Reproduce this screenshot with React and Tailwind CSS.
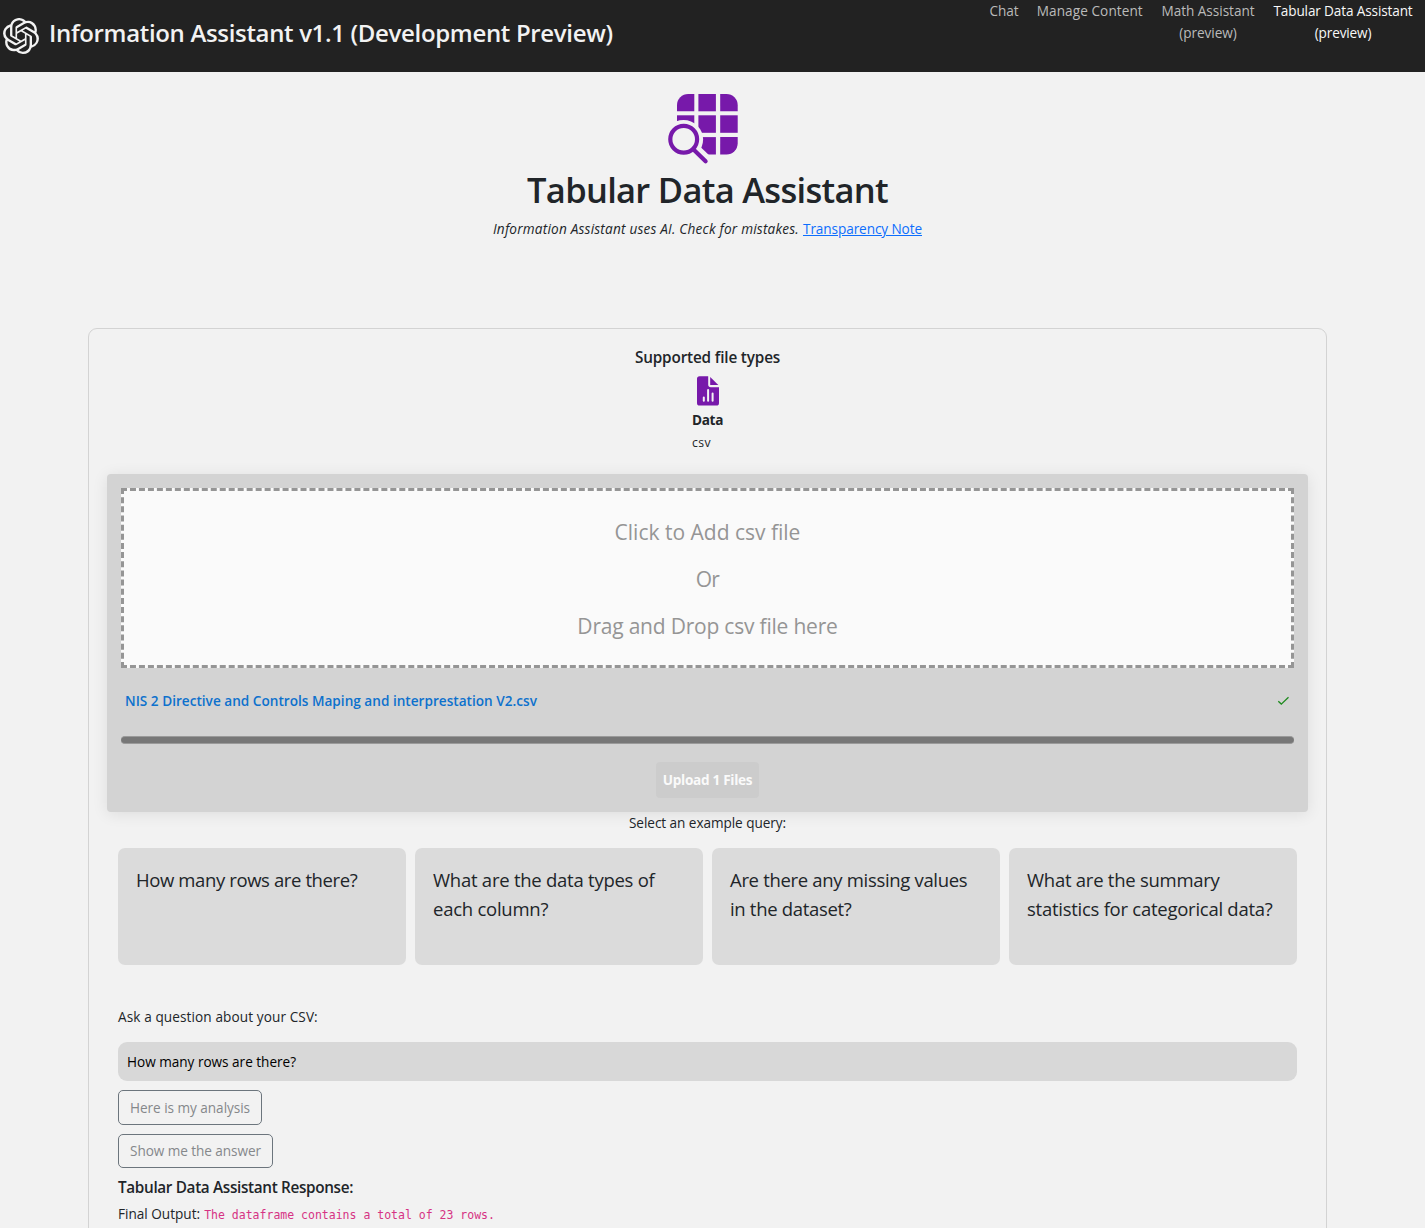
import React from "react";
import { SiOpenai } from "react-icons/si";

const navItems = [
  { lines: ["Chat"], className: "w-[29px] tracking-[-0.07px]" },
  { lines: ["Manage Content"], className: "w-[106.5px] tracking-[0.08px]" },
  { lines: ["Math Assistant", "(preview)"], className: "w-[94px] tracking-[-0.03px]" },
  { lines: ["Tabular Data Assistant", "(preview)"], className: "w-[140px] tracking-[-0.14px]", active: true },
];

const examples = [
  { lines: ["How many rows are there?"], className: "tracking-[-0.39px]" },
  { lines: ["What are the data types of", "each column?"], className: "tracking-[-0.25px]" },
  { lines: ["Are there any missing values", "in the dataset?"], className: "tracking-[-0.32px]" },
  { lines: ["What are the summary", "statistics for categorical data?"], className: "tracking-[-0.26px]" },
];

function TableSearchIcon() {
  return (
    <svg width="72" height="72" viewBox="667 93 72 72" className="block" fill="#7719aa">
      <mask id="lens-cut">
        <rect x="667" y="93" width="72" height="72" fill="#fff" />
        <circle cx="683.5" cy="139.5" r="19.6" fill="#000" />
        <path d="M690 146L712 167" stroke="#000" strokeWidth="13" />
      </mask>
      <g mask="url(#lens-cut)">
        <path d="M694.3 94V111.3H677V105.2A11.2 11.2 0 0 1 688.2 94Z" />
        <rect x="698.4" y="94" width="17.5" height="17.3" />
        <path d="M720.2 94H726.5A11.2 11.2 0 0 1 737.7 105.2V111.3H720.2Z" />
        <rect x="677" y="115.3" width="17.3" height="17.5" />
        <rect x="698.4" y="115.3" width="17.5" height="17.5" />
        <rect x="720.2" y="115.3" width="17.5" height="17.5" />
        <rect x="698.4" y="137.1" width="17.5" height="17.4" />
        <path d="M720.2 137.1H737.7V143.3A11.2 11.2 0 0 1 726.5 154.5H720.2Z" />
      </g>
      <circle cx="683.7" cy="139.3" r="13.4" fill="none" stroke="#7719aa" strokeWidth="4.2" />
      <path d="M693.5 149.5L705.6 161.2" stroke="#7719aa" strokeWidth="4.2" strokeLinecap="round" />
    </svg>
  );
}

function DataFileIcon() {
  return (
    <svg width="24" height="32" viewBox="696 375 24 32" className="block">
      <path
        fill="#7719aa"
        fillRule="evenodd"
        d="M699.6 376.2H708.2V384.6A2.6 2.6 0 0 0 710.8 387.2H719V403A2.6 2.6 0 0 1 716.4 405.6H699.6A2.6 2.6 0 0 1 697 403V378.8A2.6 2.6 0 0 1 699.6 376.2ZM702.8 397.4V400.8A1 1 0 0 0 704.8 400.8V397.4A1 1 0 0 0 702.8 397.4ZM707.1 390V400.8A1 1 0 0 0 709.1 400.8V390A1 1 0 0 0 707.1 390ZM711.6 393.6V400.8A1 1 0 0 0 713.6 400.8V393.6A1 1 0 0 0 711.6 393.6Z"
      />
      <path fill="#7719aa" d="M710.2 376.9L718.3 385.1H710.8A.6 .6 0 0 1 710.2 384.5Z" />
    </svg>
  );
}

export default function App() {
  return (
    <div className="h-[1228px] overflow-hidden bg-[#f2f2f2] font-['Open_Sans','Noto_Sans',sans-serif] text-[13.6px] leading-[21.6px] text-[#212529]">
      <header className="flex h-[72px] justify-between bg-[#222] text-[#f2f2f2]">
        <div className="flex items-center pl-[3px]">
          <SiOpenai className="size-9" />
          <h1 className="ml-[10px] pb-[6px] text-[24px] leading-[30px] font-semibold tracking-[-0.33px] whitespace-nowrap">
            Information Assistant v1.1 (Development Preview)
          </h1>
        </div>
        <nav className="flex gap-[18px] pr-[12px] text-center whitespace-nowrap">
          {navItems.map((item) => (
            <a key={item.lines[0]} className={`${item.className} ${item.active ? "text-[#f8f8f8]" : "text-[#bababa]"}`}>
              {item.lines.map((line) => (
                <span key={line} className="block">{line}</span>
              ))}
            </a>
          ))}
        </nav>
      </header>

      <main className="pr-[10px]">
        <section className="flex flex-col items-center pt-[21px]">
          <div className="pr-[9px]">
            <TableSearchIcon />
          </div>
          <h2 className="mt-[3px] text-[34.5px] leading-[43px] font-semibold tracking-[-0.7px]">Tabular Data Assistant</h2>
          <p className="mt-[7px] whitespace-nowrap">
            <em className="tracking-[0.206px]">Information Assistant uses AI. Check for mistakes.</em>
            <a className="ml-[4px] tracking-[-0.09px] text-[#0d6efd] underline">Transparency Note</a>
          </p>
        </section>

        <section className="mx-[88px] mt-[88.4px] h-[920px] rounded-[9px] border border-[#d3d3d3] px-[18px] pt-[18px]">
          <div className="flex h-[127px] flex-col items-center">
            <h3 className="h-[22px] text-[15.3px] leading-[20px] font-semibold tracking-[-0.16px]">Supported file types</h3>
            <div className="mt-[6px]">
              <DataFileIcon />
            </div>
            <div className="mt-[2px] w-[31px]">
              <p className="leading-[22px] font-bold tracking-[-0.34px]">Data</p>
              <p className="mt-px text-[12.2px] leading-[22px] tracking-[0.4px]">csv</p>
            </div>
          </div>

          <div className="h-[338px] rounded-[4px] bg-[#d3d3d3] p-[14px] shadow-[0_2px_16px_rgba(0,0,0,0.09)]">
            <div className="flex h-[180px] flex-col items-center gap-[15px] border-3 border-dashed border-[#959595] bg-[#fafafa] pt-[25px] text-[21px] leading-[32px] text-[#959595]">
              <p className="tracking-[0px]">Click to Add csv file</p>
              <p className="tracking-[-0.8px]">Or</p>
              <p className="tracking-[-0.21px]">Drag and Drop csv file here</p>
            </div>
            <div className="mt-[22px] flex h-[22px] items-center justify-between pr-[4px] pl-[4px]">
              <span className="pb-px font-semibold tracking-[0.01px] text-[#0d71cd]">
                NIS 2 Directive and Controls Maping and interprestation V2.csv
              </span>
              <svg width="14" height="10" viewBox="0 0 14 10" fill="none" stroke="#1e8a1e" strokeWidth="1.3">
                <path d="M2.3 5.3L5.3 8.1L12.5 1.2" />
              </svg>
            </div>
            <div className="mt-[24px] h-[8px] rounded-full border-y border-[#9a9a9a] bg-[#777]" />
            <div className="mt-[18px] flex justify-center">
              <button className="h-[36px] w-[103px] rounded-[4px] bg-[#ccc] pb-px leading-[21px] font-bold tracking-[-0.3px] whitespace-nowrap text-[#fafafa]">
                Upload 1 Files
              </button>
            </div>
          </div>

          <p className="h-[23px] text-center leading-[21px] tracking-[-0.06px]">Select an example query:</p>

          <div className="mx-[11px] mt-[13px] grid grid-cols-4 gap-[9px]">
            {examples.map((item) => (
              <div
                key={item.lines[0]}
                className={`h-[117px] rounded-[7px] bg-[#dbdbdb] pt-[17px] pl-[18px] text-[18.5px] leading-[29px] whitespace-nowrap ${item.className}`}
              >
                {item.lines.map((line) => (
                  <p key={line}>{line}</p>
                ))}
              </div>
            ))}
          </div>

          <div className="mx-[11px] mt-[41px]">
            <p className="h-[22px] tracking-[0.1px]">Ask a question about your CSV:</p>
            <div className="mt-[14px] h-[39px] rounded-[9px] bg-[#d8d8d8] pl-[9px] leading-[40px] tracking-[-0.02px] text-black">
              How many rows are there?
            </div>
            <button className="mt-[9px] block h-[35px] w-[144px] rounded-[5px] border border-[#6c757d] pl-[11px] text-left tracking-[-0.04px] text-[#85888b]">
              Here is my analysis
            </button>
            <button className="mt-[9px] block h-[34px] w-[155px] rounded-[5px] border border-[#6c757d] pl-[11px] text-left tracking-[-0.07px] text-[#85888b]">
              Show me the answer
            </button>
            <h3 className="mt-[9px] h-[22px] text-[15.3px] leading-[20px] font-semibold tracking-[-0.34px]">Tabular Data Assistant Response:</h3>
            <p className="mt-[4px] whitespace-nowrap">
              Final Output:
              <code className="ml-[4px] font-['DejaVu_Sans_Mono',monospace] text-[11.5px] text-[#d63384]">
                The dataframe contains a total of 23 rows.
              </code>
            </p>
          </div>
        </section>
      </main>
    </div>
  );
}
